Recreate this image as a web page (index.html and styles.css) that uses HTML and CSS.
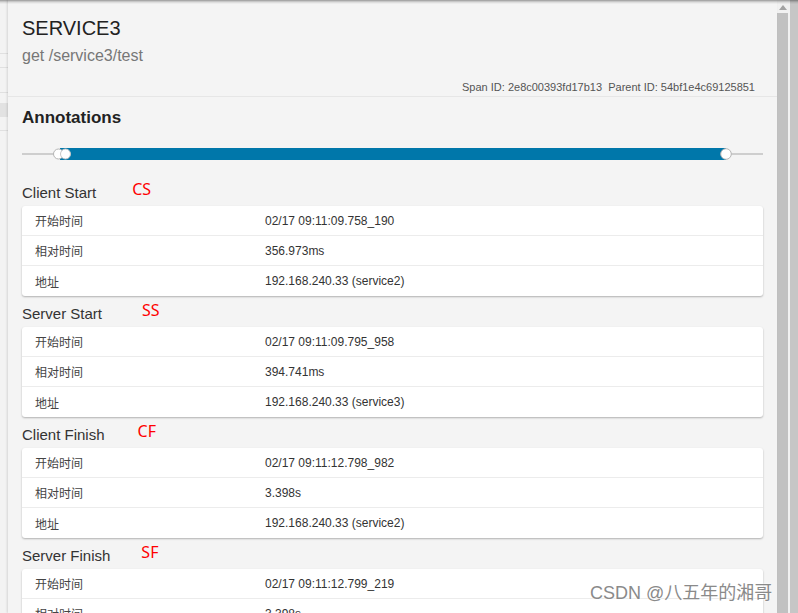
FILE: index.html
```html
<!DOCTYPE html>
<html lang="zh">
<head>
<meta charset="utf-8">
<title>SERVICE3</title>
<link rel="stylesheet" href="styles.css">
</head>
<body>
<div class="page">
  <div class="backdrop">
    <div class="bd-gap1"></div>
    <div class="bd-line"></div>
    <div class="bd-gap2"></div>
    <div class="bd-line"></div>
    <div class="bd-gap3"></div>
    <div class="bd-line"></div>
    <div class="bd-block"></div>
    <div class="bd-gap4"></div>
    <div class="bd-line"></div>
  </div>
  <div class="modal">
    <div class="header">
      <div class="svc">SERVICE3</div>
      <div class="endpoint">get /service3/test</div>
      <div class="ids">Span ID: 2e8c00393fd17b13&nbsp;&nbsp;Parent ID: 54bf1e4c69125851</div>
    </div>
    <div class="content">
      <div class="section-title">Annotations</div>
      <svg class="timeline" width="741" height="20" viewBox="0 0 741 20">
        <line x1="0" y1="10" x2="741" y2="10" stroke="#a8a8a8" stroke-width="1"/>
        <rect x="38" y="4" width="666" height="12" fill="#0077aa"/>
        <circle cx="36.5" cy="10" r="5" fill="#fff" stroke="#b5b5b5" stroke-width="1"/>
        <circle cx="43.5" cy="10" r="5" fill="#fff" stroke="#c8c8c8" stroke-width="1"/>
        <circle cx="704" cy="10" r="5.3" fill="#fff" stroke="#b5b5b5" stroke-width="1"/>
      </svg>

      <div class="ann-title">Client Start<span class="mark mark-cs">CS</span></div>
      <div class="card">
        <div class="row"><div class="k">开始时间</div><div class="v">02/17 09:11:09.758_190</div></div>
        <div class="row"><div class="k">相对时间</div><div class="v">356.973ms</div></div>
        <div class="row"><div class="k">地址</div><div class="v">192.168.240.33 (service2)</div></div>
      </div>

      <div class="ann-title">Server Start<span class="mark mark-ss">SS</span></div>
      <div class="card">
        <div class="row"><div class="k">开始时间</div><div class="v">02/17 09:11:09.795_958</div></div>
        <div class="row"><div class="k">相对时间</div><div class="v">394.741ms</div></div>
        <div class="row"><div class="k">地址</div><div class="v">192.168.240.33 (service3)</div></div>
      </div>

      <div class="ann-title">Client Finish<span class="mark mark-cf">CF</span></div>
      <div class="card">
        <div class="row"><div class="k">开始时间</div><div class="v">02/17 09:11:12.798_982</div></div>
        <div class="row"><div class="k">相对时间</div><div class="v">3.398s</div></div>
        <div class="row"><div class="k">地址</div><div class="v">192.168.240.33 (service2)</div></div>
      </div>

      <div class="ann-title">Server Finish<span class="mark mark-sf">SF</span></div>
      <div class="card">
        <div class="row"><div class="k">开始时间</div><div class="v">02/17 09:11:12.799_219</div></div>
        <div class="row"><div class="k">相对时间</div><div class="v">3.398s</div></div>
        <div class="row"><div class="k">地址</div><div class="v">192.168.240.33 (service3)</div></div>
      </div>
    </div>
  </div>
  <div class="scrollbar">
    <div class="arrow"></div>
    <div class="thumb"></div>
  </div>
  <div class="outer-bar"></div>
</div>
<div class="watermark">CSDN @八五年的湘哥</div>
</body>
</html>
```

FILE: styles.css
```css
html, body {
  margin: 0;
  padding: 0;
  height: 613px;
  overflow: hidden;
  background: #f4f4f4;
  font-family: "Liberation Sans", Arial, "Noto Sans CJK SC", sans-serif;
}

body::before {
  content: "";
  position: fixed;
  left: 0;
  top: 0;
  right: 0;
  height: 4px;
  background: linear-gradient(to bottom, rgba(0,0,0,0.38), rgba(0,0,0,0.12) 50%, rgba(0,0,0,0));
  z-index: 5;
}

.page {
  display: flex;
  height: 613px;
}

.backdrop {
  width: 8px;
  flex: none;
  background: #f3f3f3;
  display: flex;
  flex-direction: column;
}
.bd-gap1 { height: 53px; }
.bd-gap2 { height: 13px; }
.bd-gap3 { height: 24px; }
.bd-gap4 { height: 13px; }
.bd-line { height: 1px; background: #e0e0e0; }
.bd-block { height: 14px; margin-top: 10px; background: #e2e2e2; }

.modal {
  width: 769px;
  flex: none;
  background: #f4f4f4;
  overflow: hidden;
  box-shadow: -1px 0 2px rgba(0,0,0,0.12);
  position: relative;
}

.header {
  padding: 16px 22px 2px 14px;
  border-bottom: 1px solid #e6e6e6;
}
.svc {
  font-size: 20px;
  line-height: 24px;
  color: #222;
}
.endpoint {
  margin-top: 6px;
  font-size: 16px;
  line-height: 20px;
  color: #777;
}
.ids {
  margin-top: 14px;
  font-size: 11px;
  line-height: 14px;
  color: #555;
  text-align: right;
}

.content {
  padding: 0 14px;
}
.section-title {
  margin-top: 11px;
  font-size: 17px;
  line-height: 20px;
  font-weight: bold;
  color: #222;
}
.timeline {
  display: block;
  margin-top: 16px;
}

.ann-title {
  margin-top: 9px;
  margin-bottom: 4px;
  height: 18px;
  font-size: 15px;
  line-height: 18px;
  color: #333;
  white-space: nowrap;
}
.timeline + .ann-title {
  margin-top: 20px;
}

.mark {
  font-family: "Noto Sans", "Liberation Sans", sans-serif;
  font-size: 16px;
  line-height: 0;
  color: #ff0000;
  vertical-align: 3px;
}
.mark-cs { margin-left: 36px; }
.mark-ss { margin-left: 40px; }
.mark-cf { margin-left: 33px; }
.mark-sf { margin-left: 31px; }

.card {
  background: #fff;
  border-radius: 3px;
  box-shadow: 0 1px 2px rgba(0,0,0,0.28);
}
.row {
  display: grid;
  grid-template-columns: 243px 1fr;
  height: 30px;
  box-sizing: border-box;
  align-items: center;
  font-size: 12px;
  border-bottom: 1px solid #ececec;
}
.row:last-child {
  border-bottom: none;
}
.k {
  padding-left: 13px;
  color: #444;
  font-family: "Noto Sans CJK SC", "Liberation Sans", sans-serif;
}
.v {
  color: #333;
}

.scrollbar {
  width: 13px;
  flex: none;
  background: #f1f1f1;
  display: flex;
  flex-direction: column;
}
.arrow {
  width: 0;
  height: 0;
  margin: 5px 0 0 2px;
  border-left: 4px solid transparent;
  border-right: 4px solid transparent;
  border-bottom: 5px solid #a3a3a3;
}
.thumb {
  margin-top: 3px;
  width: 11px;
  flex: 1;
  background: #c1c1c1;
}
.outer-bar {
  flex: 1;
  background: #c6c6c6;
}

.watermark {
  position: absolute;
  left: 590px;
  top: 582px;
  font-size: 18px;
  line-height: 22px;
  color: #8a8a8a;
  font-family: "Liberation Sans", "Noto Sans CJK SC", sans-serif;
  text-shadow: 0 0 2px #fff, 0 0 2px #fff;
  white-space: nowrap;
  z-index: 6;
}
```
